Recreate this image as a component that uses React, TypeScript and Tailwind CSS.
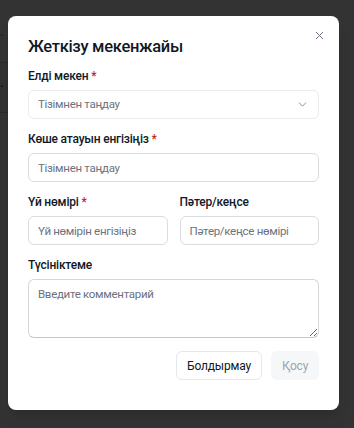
import React from 'react';
import { X, ChevronDown } from 'lucide-react';

const font = { fontFamily: 'Roboto, "Noto Sans", sans-serif' };

const Label = ({ text, required }: { text: string; required?: boolean }) => (
  <label className="block text-[12px] leading-5 font-medium tracking-[-0.2px] text-[#111827]">
    {text}
    {required && <span className="text-[#c81e1e]"> *</span>}
  </label>
);

const TextInput = ({ placeholder }: { placeholder: string }) => (
  <input
    type="text"
    placeholder={placeholder}
    className="mt-1 block h-[29px] w-full rounded-md border border-[#d9dce1] bg-white px-[9px] text-[11.5px] tracking-[-0.3px] text-[#111827] outline-none placeholder:text-[#6b7280]"
  />
);

const AddressModal = () => (
  <div className="absolute left-[8px] top-[16px] flex w-[331px] flex-col rounded-lg bg-white px-5 pb-[30px] pt-[17px] shadow-lg">
    <button type="button" className="absolute right-[13px] top-[13px] text-[#6b7280]">
      <X size={13} strokeWidth={1.8} />
    </button>
    <h2 className="text-[16.5px] leading-7 font-medium tracking-[-0.3px] text-[#111827]">Жеткізу мекенжайы</h2>

    <div className="mt-[5px]">
      <Label text="Елді мекен" required />
      <div className="mt-1 flex h-[29px] items-center justify-between rounded-md border border-[#e8ebf0] bg-white pl-[9px] pr-[9px]">
        <span className="text-[11.5px] tracking-[-0.3px] text-[#6b7280]">Тізімнен таңдау</span>
        <ChevronDown size={13} strokeWidth={1.5} className="text-[#6b7280]" />
      </div>
    </div>

    <div className="mt-[10px]">
      <Label text="Көше атауын енгізіңіз" required />
      <TextInput placeholder="Тізімнен таңдау" />
    </div>

    <div className="mt-[10px] grid grid-cols-2 gap-3">
      <div>
        <Label text="Үй нөмірі" required />
        <TextInput placeholder="Үй нөмірін енгізіңіз" />
      </div>
      <div>
        <Label text="Пәтер/кеңсе" />
        <TextInput placeholder="Пәтер/кеңсе нөмірі" />
      </div>
    </div>

    <div className="mt-[10px]">
      <Label text="Түсініктеме" />
      <textarea
        placeholder="Введите комментарий"
        className="mt-1 block h-[59px] w-full rounded-md border border-[#d4d6da] border-b-[#c4c6ca] px-[9px] py-[6px] text-[11.5px] tracking-[-0.3px] outline-none placeholder:text-[#6b7280]"
      />
    </div>

    <div className="mt-[13px] flex justify-end gap-[9px]">
      <button
        type="button"
        className="h-[29px] w-[86px] rounded-md border border-[#e3e7ee] bg-white text-[12px] tracking-[-0.2px] text-[#111827]"
      >
        Болдырмау
      </button>
      <button
        type="button"
        className="h-[29px] w-[48px] rounded-md bg-[#f6f7f9] text-[12px] tracking-[-0.2px] text-[#9ca3af]"
      >
        Қосу
      </button>
    </div>
  </div>
);

const App = () => (
  <div className="relative h-[428px] w-[354px] overflow-hidden bg-white" style={font}>
    <div className="flex w-[8px] flex-col overflow-hidden">
      <div className="h-[63px] border-b border-gray-300 pt-[26px] text-[14px] text-gray-500">
        <span className="block w-[8px]">·</span>
      </div>
      <div className="h-[50px] border-b border-gray-300 bg-gray-50 pt-[14px] text-[14px] text-gray-700">
        <span className="block w-[8px]">·</span>
      </div>
    </div>
    <div className="absolute inset-0 bg-black/80" />
    <AddressModal />
  </div>
);

export default App;
